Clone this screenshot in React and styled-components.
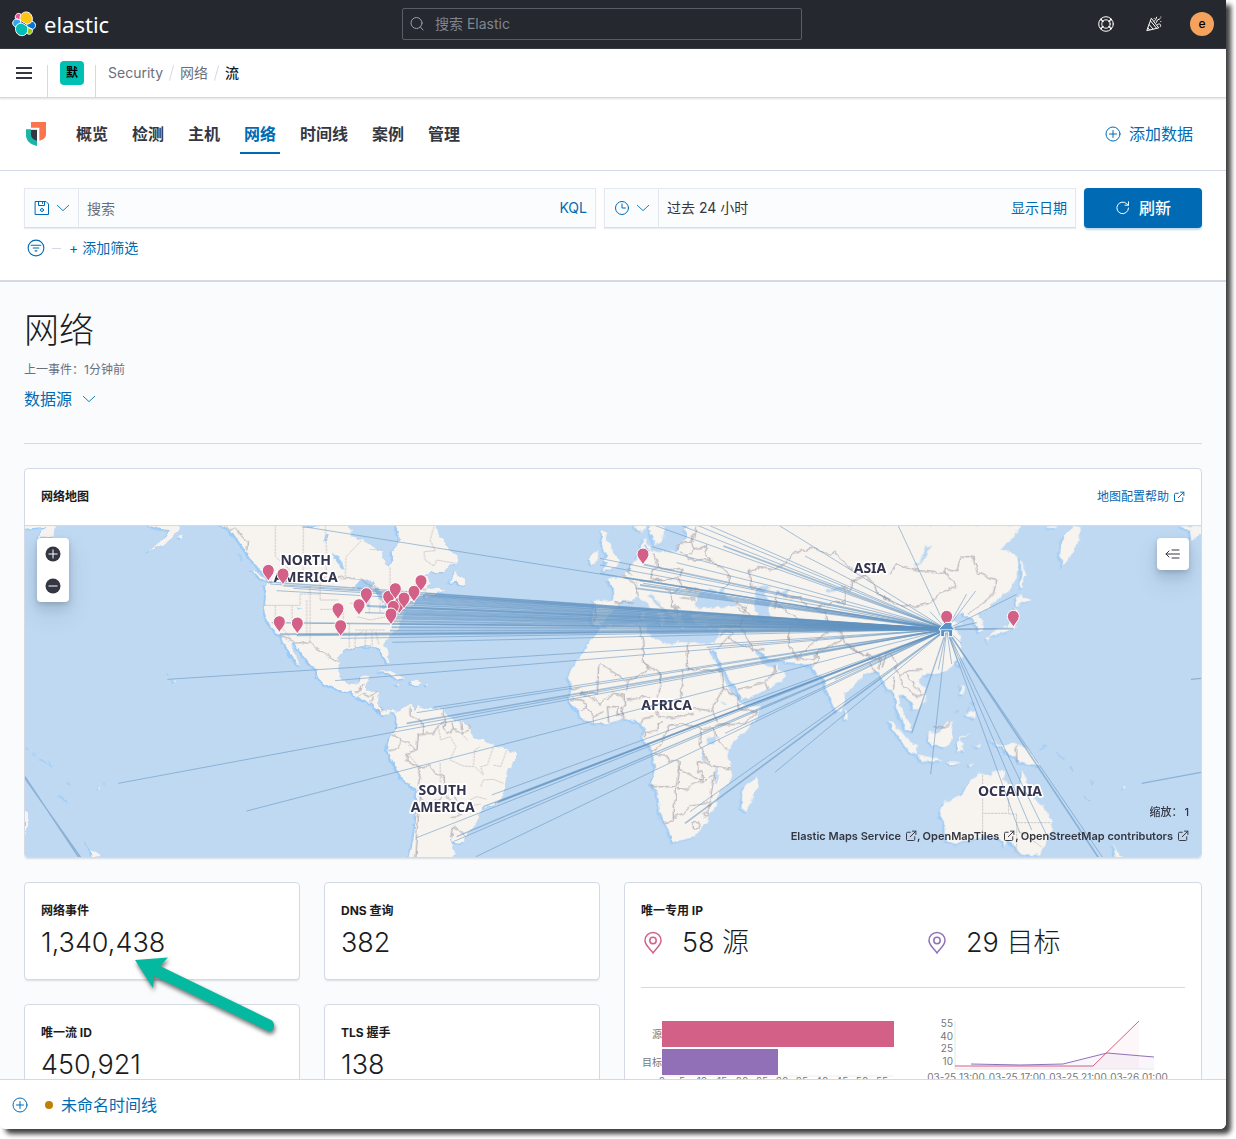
import React from 'react';
import styled, { createGlobalStyle, css } from 'styled-components';

const c = {
  ink: '#343741',
  title: '#1a1c21',
  muted: '#69707d',
  link: '#006bb4',
  line: '#d3dae6',
  pink: '#d36086',
  purple: '#9170b8',
  accent: '#6092c0',
};

const GlobalStyle = createGlobalStyle`
  *, *::before, *::after { box-sizing: border-box; }
  body {
    margin: 0;
    min-height: 100vh;
    background: #fff;
    color: ${c.ink};
    font: 400 14px/24px Inter, 'Noto Sans CJK SC', sans-serif;
  }
  button, input { font: inherit; color: inherit; }
  button { border: 0; padding: 0; background: none; cursor: pointer; }
  a { color: ${c.link}; text-decoration: none; }
  h1, h2, h3, p { margin: 0; }
  svg { display: block; flex: none; }
`;

/* ---------- window ---------- */

const Desktop = styled.div`
  height: 100vh;
  padding: 0 10px 10px 0;
  overflow: hidden;
`;

const Frame = styled.div`
  display: flex;
  flex-direction: column;
  height: 100%;
  overflow: hidden;
  background: #fff;
  border-radius: 0 0 6px 6px;
  box-shadow: 5px 5px 5px rgba(0, 0, 0, 0.75);
`;

const Scroller = styled.main`
  flex: 1;
  min-height: 0;
  overflow-y: auto;
  scrollbar-width: none;
  background: #fafbfd;
`;

/* ---------- headers ---------- */

const TopBar = styled.header`
  display: flex;
  align-items: center;
  height: 49px;
  flex: none;
  padding: 0 12px;
  border-bottom: 1px solid #343741;
  background: #25282f;
  color: #fff;
`;

const Brand = styled.a`
  display: flex;
  flex: 1 1 0;
  align-items: center;
  gap: 8px;
  color: #fff;
  font: 400 22px/32px 'Noto Sans', sans-serif;
`;

const GlobalSearch = styled.label`
  display: flex;
  align-items: center;
  gap: 8px;
  width: 400px;
  height: 32px;
  padding: 0 6px;
  border: 1px solid #5a5d66;
  border-radius: 2px;
  color: #98a2b3;
  input {
    flex: 1;
    min-width: 0;
    border: 0;
    outline: 0;
    background: none;
  }
  input::placeholder { color: #81858f; opacity: 1; }
`;

const TopActions = styled.div`
  display: flex;
  flex: 1 1 0;
  justify-content: flex-end;
  gap: 24px;
  padding-left: 22px;
`;

const IconButton = styled.button`
  display: grid;
  place-items: center;
  width: ${(p) => p.$size || 24}px;
  height: ${(p) => p.$size || 24}px;
  color: ${(p) => p.$color || 'inherit'};
`;

const Avatar = styled.button`
  width: 24px;
  height: 24px;
  border-radius: 50%;
  background: #f5a35c;
  color: #000;
  font-size: 12px;
  font-weight: 500;
  line-height: 24px;
`;

const CrumbBar = styled.div`
  display: flex;
  align-items: center;
  height: 49px;
  flex: none;
  border-bottom: 1px solid ${c.line};
  box-shadow: 0 1px 2px rgba(152, 162, 179, 0.35);
`;

const MenuButton = styled(IconButton)`
  width: 47px;
  height: 48px;
`;

const Divider = styled.span`
  align-self: flex-end;
  width: 1px;
  height: 32px;
  background: ${c.line};
`;

const Space = styled.button`
  width: 24px;
  height: 24px;
  margin: 0 11px 0 12px;
  border-radius: 4px;
  background: #00bfb3;
  color: #000;
  font-size: 12px;
  font-weight: 600;
  line-height: 24px;
`;

const Crumbs = styled.nav`
  display: flex;
  align-items: center;
  gap: 8px;
  padding-left: 12px;
  a { color: ${c.muted}; }
  strong { font-weight: 500; color: ${c.title}; }
`;

const Slash = styled.span`
  width: 1px;
  height: 16px;
  background: ${c.line};
  transform: rotate(15deg);
`;

const NavBar = styled.div`
  display: flex;
  align-items: center;
  height: 73px;
  flex: none;
  padding: 0 33px 0 26px;
  border-bottom: 1px solid ${c.line};
`;

const Tabs = styled.nav`
  display: flex;
  flex: 1;
  gap: 16px;
  padding-left: 26px;
`;

const Tab = styled.a`
  padding: 6px 4px;
  font-size: 16px;
  font-weight: 600;
  line-height: 28px;
  color: ${(p) => (p.$active ? c.link : c.ink)};
  box-shadow: ${(p) => (p.$active ? `inset 0 -2px ${c.link}` : 'none')};
`;

const IconLink = styled.a`
  display: flex;
  align-items: center;
  gap: ${(p) => p.$gap || 8}px;
  font-size: ${(p) => p.$size || 14}px;
`;

/* ---------- query bar ---------- */

const Query = styled.section`
  flex: none;
  padding: 17px 24px 20px;
  border-bottom: 2px solid ${c.line};
`;

const QueryRow = styled.div`
  display: flex;
  gap: 8px;
`;

const Field = styled.div`
  display: flex;
  flex: ${(p) => p.$flex};
  min-width: 0;
  height: 40px;
  border: 1px solid #e4e8f0;
  border-bottom-color: #d9deea;
  background: #fbfcfd;
  box-shadow: 0 1px 1px rgba(152, 162, 179, 0.2);
`;

const FieldMenu = styled.button`
  display: flex;
  align-items: center;
  justify-content: center;
  gap: 6px;
  width: 54px;
  border-right: 1px solid #e4e8f0;
  color: ${c.link};
`;

const FieldInput = styled.input`
  flex: 1;
  min-width: 0;
  padding: 2px 8px 0;
  border: 0;
  outline: 0;
  background: none;
  &::placeholder { color: ${c.muted}; opacity: 1; }
`;

const FieldValue = styled.button`
  flex: 1;
  padding: 0 8px;
  text-align: left;
`;

const FieldAction = styled.button`
  padding: 0 8px;
  color: ${c.link};
`;

const Refresh = styled.button`
  display: flex;
  align-items: center;
  justify-content: center;
  gap: 8px;
  width: 118px;
  height: 40px;
  border-radius: 4px;
  background: ${c.link};
  color: #fff;
  font-size: 16px;
  font-weight: 500;
  box-shadow: 0 2px 2px rgba(0, 107, 180, 0.25);
`;

const Filters = styled.div`
  display: flex;
  align-items: center;
  gap: 4px;
  padding-top: 8px;
`;

const Dash = styled.span`
  width: 9px;
  height: 1px;
  background: ${c.line};
`;

const AddFilter = styled.button`
  padding: 0 4px;
  color: ${c.link};
`;

/* ---------- page ---------- */

const Page = styled.div`
  padding: 24px;
`;

const PageTitle = styled.h1`
  color: ${c.title};
  font-size: 35px;
  font-weight: 200;
  line-height: 48px;
`;

const LastEvent = styled.p`
  margin-top: 6px;
  color: ${c.muted};
  font-size: 12px;
  line-height: 20px;
`;

const SourceButton = styled.button`
  display: flex;
  align-items: center;
  gap: 10px;
  margin-top: 7px;
  color: ${c.link};
  font-size: 16px;
`;

const Rule = styled.hr`
  margin: ${(p) => p.$space};
  border: 0;
  border-top: 1px solid ${c.line};
`;

const panel = css`
  background: #fff;
  border: 1px solid ${c.line};
  border-radius: 4px;
  box-shadow: 0 2px 2px -1px rgba(152, 162, 179, 0.35);
`;

const MapPanel = styled.section`
  ${panel}
  overflow: hidden;
`;

const MapHead = styled.div`
  display: flex;
  align-items: center;
  justify-content: space-between;
  height: 57px;
  padding: 0 16px;
  border-bottom: 1px solid ${c.line};
`;

const SmallTitle = styled.h3`
  color: ${c.title};
  font-size: 12px;
  font-weight: 700;
  line-height: 24px;
`;

const MapBox = styled.div`
  position: relative;
  height: 331px;
  background: #bfd9f2;
`;

const MapArt = styled.svg`
  width: 100%;
  height: 100%;
`;

const MapTools = styled.div`
  position: absolute;
  top: 12px;
  ${(p) => p.$side}: 12px;
  display: flex;
  flex-direction: column;
  border-radius: 4px;
  background: #fff;
  color: ${c.ink};
  box-shadow: 0 12px 24px rgba(65, 78, 101, 0.14), 0 6px 12px rgba(65, 78, 101, 0.16),
    0 2px 4px rgba(65, 78, 101, 0.2);
`;

const MapNotes = styled.div`
  position: absolute;
  right: 12px;
  bottom: 9px;
  font-size: 11px;
  line-height: 24px;
  text-align: right;
  color: ${c.ink};
`;

const Zoom = styled.div`
  font-weight: 500;
  span { margin-left: 2px; }
`;

const Credits = styled.div`
  display: flex;
  justify-content: flex-end;
  font-weight: 600;
  a {
    display: flex;
    align-items: center;
    gap: 4px;
    color: ${c.ink};
  }
  span { margin-right: 2px; }
`;

/* ---------- statistics ---------- */

const Stats = styled.div`
  display: grid;
  grid-template-columns: 1fr 1fr;
  gap: 24px;
  padding-top: 24px;
`;

const Cards = styled.div`
  display: grid;
  grid-template-columns: 1fr 1fr;
  grid-auto-rows: 98px;
  gap: 24px;
`;

const Card = styled.section`
  ${panel}
  position: relative;
  padding: 16px;
`;

const Figure = styled.p`
  color: ${c.title};
  font-size: 27px;
  font-weight: 300;
  line-height: 40px;
`;

const Pair = styled.div`
  display: grid;
  grid-template-columns: 1fr 1fr;
  gap: 24px;
`;

const Metric = styled.div`
  display: flex;
  align-items: center;
  gap: 17px;
`;

const Arrow = styled.svg`
  position: absolute;
  z-index: 2;
  top: 69px;
  left: 105px;
  filter: drop-shadow(1px 3px 2px rgba(0, 0, 0, 0.55));
`;

const Chart = styled.svg`
  font: 400 10px Inter, 'Noto Sans CJK SC', sans-serif;
  fill: #777;
`;

const Timeline = styled.footer`
  display: flex;
  align-items: center;
  height: 50px;
  flex: none;
  gap: 17px;
  padding: 0 12px;
  border-top: 1px solid ${c.line};
  background: #fff;
`;

const TimelineName = styled.button`
  display: flex;
  align-items: center;
  gap: 8px;
  color: ${c.link};
  font-size: 16px;
  &::before {
    content: '';
    width: 8px;
    height: 8px;
    border-radius: 50%;
    background: #c07f06;
  }
`;

/* ---------- icons ---------- */

const Icon = ({ size = 16, children, stroke = 1, ...rest }) => (
  <svg width={size} height={size} viewBox="0 0 16 16" fill="none" stroke="currentColor"
    strokeWidth={stroke} strokeLinecap="round" strokeLinejoin="round" aria-hidden="true" {...rest}>
    {children}
  </svg>
);

const ElasticLogo = () => (
  <svg width="24" height="26" viewBox="0 0 72 78" aria-hidden="true">
    <g stroke="#fff" strokeWidth="3">
      <path d="M10 22C8 10 18 3 27 10L25 27Z" fill="#f04e98" />
      <path d="M12 24C-1 28-1 44 11 48L27 38L25 27Z" fill="#36a4ef" />
      <path d="M60 31C74 34 74 52 61 55L44 46L45 34Z" fill="#0b73d1" />
      <path d="M61 55C64 65 54 74 46 68L46 49Z" fill="#93c90e" />
      <path d="M25 28C21 14 30 3 43 3C56 3 64 18 60 31C57 36 50 40 43 39Z" fill="#fec514" />
      <path d="M11 48C13 40 22 36 30 36L46 46C50 60 44 74 30 74C17 74 8 62 11 48Z" fill="#02bcb7" />
    </g>
  </svg>
);

const SecurityLogo = () => (
  <svg width="20" height="24" viewBox="0 0 60 72" aria-hidden="true">
    <path d="M15 0H60V36C60 47 52 54 40 56V17H15Z" fill="#fa744e" />
    <path d="M0 22H15V23H33V72C14 68 0 57 0 40Z" fill="#1db3a8" />
    <path d="M15 24H33V56C22 53 15 47 15 38Z" fill="#343741" />
  </svg>
);

const Magnifier = () => (
  <Icon><circle cx="7.5" cy="7" r="5.5" /><path d="M11.5 11l2.5 3" /></Icon>
);
const LifeRing = () => (
  <Icon>
    <circle cx="8" cy="8" r="7.3" /><circle cx="8" cy="8" r="4.2" />
    <path d="M3 2.9l2.1 2.4M2.9 4.4L5 5.6M13 2.9l-2.1 2.4M13.2 4.4L11 5.6M3 13.1l2.1-2.4M2.9 11.6L5 10.4M13 13.1l-2.1-2.4M13.2 11.6L11 10.4" />
  </Icon>
);
const Cheer = () => (
  <Icon>
    <path d="M5.2 2.6L.8 14.6L12.3 12ZM4.6 5L10.400 12M3.200 8.600L7 13M2 12L3.600 14" />
    <path d="M8.200 2.300v.1M10.600 1.200l-.8 2.400l-1.400 1.400M14 2.800l-2.600 1.200l-1 2.400M14.800 1v.1M14.800 5.400v.1M11.600 8.400c2.400-1.600 4 .6 2.600 2.400" />
  </Icon>
);
const Burger = () => (
  <Icon stroke={2} strokeLinecap="butt"><path d="M0 3h16M0 8h16M0 13h16" /></Icon>
);
const PlusCircle = () => (
  <Icon><circle cx="8" cy="8" r="7" /><path d="M4.500 8h7M8 4.500v7" /></Icon>
);
const SaveIcon = () => (
  <Icon>
    <path d="M1.500 1.500h10.500l2.500 2.500v10.500h-13zM4.500 1.500v4h6v-4" />
    <circle cx="8" cy="10" r="1.500" /><path d="M8.500 2.500v1" />
  </Icon>
);
const ChevronDown = () => (
  <Icon size={14}><path d="M1.500 5l6.500 6l6.500-6" /></Icon>
);
const Clock = () => (
  <Icon><circle cx="8" cy="8" r="6.500" /><path d="M8 4v4h3.500" /></Icon>
);
const RefreshIcon = () => (
  <Icon><path d="M13.500 8A5.800 5.800 0 1 1 11.800 3.800L13.500 5.200M13.500 1.800v3.400h-3.500" /></Icon>
);
const FilterIcon = () => (
  <Icon size={18}><circle cx="8" cy="8" r="7" /><path d="M3.800 5.500h8.400M5.500 8h5M7.200 10.500h1.600" /></Icon>
);
const Popout = () => (
  <Icon size={12} stroke={1.300}>
    <path d="M7 3H3.500Q2 3 2 4.500v8Q2 14 3.500 14h8Q13 14 13 12.500V9M10 1.500h4.500V6M14.500 1.500L7 9" />
  </Icon>
);
const ZoomDot = ({ plus }) => (
  <Icon strokeLinecap="butt">
    <circle cx="8" cy="8" r="7.500" fill={c.ink} stroke="none" />
    <path d={plus ? 'M3.500 8h9M8 3.500v9' : 'M3.500 8h9'} stroke="#fff" />
  </Icon>
);
const MenuLeft = () => (
  <Icon><path d="M7 4h7M1 8h13.500M7 12h7M4 5L1 8l3 3" /></Icon>
);
const MarkerIcon = ({ color }) => (
  <svg width="24" height="24" viewBox="0 0 24 24" fill="none" stroke={color} strokeWidth="1.500" aria-hidden="true">
    <path d="M12 22C10 18.500 4 14.500 4 9.500A8 8 0 0 1 20 9.500C20 14.500 14 18.500 12 22Z" />
    <circle cx="12" cy="9.500" r="3.200" />
  </svg>
);

/* ---------- world map ---------- */

const AMERICAS = `M-267 15L-230 40L-212 66L-190 95L-170 125L-150 150L-130 165L-125 190L-135 195L-132 230L-137 275L-130 300
L-108 332L-85 350L-72 382L-55 408L-30 438L-33 428L-45 405L-58 372L-46 366L-30 392L0 430L20 450L22 470L40 490L75 505L120 515L135 525
L165 545L185 550L200 570L215 582L232 584L240 576L255 578L262 592L262 620L240 650L230 690L245 715L275 775L320 810L322 860
L318 900L310 960L298 1015L425 1015L435 998L425 975L420 960L440 968L463 965L463 948L475 940L500 910L505 885L520 865L555 855
L575 835L585 800L590 755L618 722L618 700L590 690L575 682L540 672L520 660L490 655L480 620L460 606L435 602L405 580L395 568
L345 566L325 558L314 570L305 550L290 558L270 572L260 578L250 568L235 575L215 575L205 558L205 530L207 520L190 515L165 515
L165 500L175 482L178 465L155 468L148 487L120 495L95 482L85 450L88 410L105 390L135 384L155 378L190 380L210 385L222 412
L235 430L234 402L222 372L240 345L268 320L274 290L290 265L312 255L320 238L345 222L350 236L375 222L405 212L385 206L362 210
L345 205L365 190L355 172L340 170L365 155L402 156L415 138L440 130L443 110L420 92L405 68L385 40L378 15L258 15L270 60L262 76
L245 95L250 122L240 141L224 128L218 110L215 90L195 85L170 65L125 52L125 30L112 15Z`;

const AMERICAN_ISLES = `M415 188L430 165L440 150L440 165L465 180L465 195L445 192L440 185ZM208 455L235 450L260 463L286 475L265 478
L235 460ZM303 482L320 482L335 488L325 494L305 495ZM255 492l12 2l-4 4ZM346 492l8 1l-2 4ZM-485 15L-392 15L-395 30L-430 68L-487 95
L-440 60L-420 30L-460 25ZM-396 48L-382 44L-388 56ZM-855 15L-764 15L-770 50L-818 50L-790 20L-855 26ZM-175 148L-140 170L-130 182L-148 176Z
M-855 870L-846 880L-844 910L-855 948ZM-660 985L-655 1015L-632 1012L-634 1002ZM-409 478l5 2l-4 5ZM-632 800l4 4l-5 6Z`;

const OLD_WORLD = `M-20 240L15 242L38 240L44 215L22 180L48 172L66 165L88 150L96 130L110 116L122 82L128 55L140 52L138 70L150 90
L175 96L230 95L236 70L256 62L262 40L250 28L268 15L1260 15L1262 22L1200 92L1230 95L1250 110L1255 130L1246 180L1225 215L1190 240
L1170 262L1135 280L1146 300L1153 330L1136 338L1128 318L1122 300L1105 288L1092 290L1086 276L1096 268L1080 282L1060 300L1066 308
L1086 310L1066 322L1078 348L1085 380L1086 408L1060 436L1020 460L990 465L970 460L956 480L975 508L979 540L956 565L940 566
L930 542L912 524L898 530L900 560L912 586L932 612L936 636L916 626L900 592L888 565L886 520L862 510L850 485L840 460L812 455
L790 465L762 500L735 520L732 560L712 580L700 560L676 500L668 468L650 465L635 440L600 430L560 426L530 420L500 412L480 395
L465 382L466 400L482 418L490 432L505 440L522 442L528 428L530 446L556 462L545 485L500 510L424 542L412 512L390 480L355 420
L342 390L336 392L326 385L330 400L345 430L370 475L395 520L415 545L440 560L482 558L470 592L440 632L400 665L383 700L395 752
L390 785L355 820L350 862L328 882L320 910L280 952L215 968L205 930L180 880L172 812L152 795L166 745L155 690L130 655L134 622
L120 612L100 600L70 597L25 610L-20 610L-45 602L-70 570L-92 545L-85 500L-97 470L-75 430L-50 400L-30 360L-10 340L2 322
L-14 318L-26 300L-18 262Z`;

const OLD_ISLES = `M5 34L22 36L16 58L32 72L36 96L48 106L60 122L48 142L10 152L22 132L8 122L24 108L14 92L6 66ZM-22 100L-6 90
L-6 120L-26 135L-32 118ZM100 15L122 36L140 15ZM148 15L152 42L166 76L186 64L192 30L188 15ZM470 765L476 788L456 842L440 876
L424 864L426 826L434 796L456 786ZM735 570L743 580L742 600L734 596ZM174 306l22-2l-8 12ZM124 278l8-4l2 22l-9 2ZM244 322l24 2l-20 4Z
M318 328l16-5l-10 9ZM138 74l14 2l-8 14Z`;

const FAR_ISLES = `M392 288L400 320L410 346L398 352L402 380L390 386L394 340ZM378 412L394 402L404 412L422 420L396 430L380 442Z
M374 440L386 468L372 508L340 518L306 526L290 534L300 520L336 504L356 496L370 474ZM286 530L300 535L294 550ZM550 198L568 200L570 236
L542 290L518 320L510 282L520 226ZM470 198h28v6h-28ZM870 198L932 198L932 222L904 244L898 210ZM202 602L210 600L208 626ZM212 675
L222 680L218 704L206 702L214 690ZM228 762L256 754L256 776L238 770ZM-6 785L12 790L40 822L64 850L82 860L80 886L52 868L20 820Z
M82 884L108 888L158 902L128 906L88 898ZM115 820L150 816L168 790L192 784L182 806L188 832L166 862L126 856L114 838ZM200 848L212 830
L242 824L208 840L222 852L214 856L222 876L212 866L200 876ZM166 904h30l14 8l-30-2ZM236 912l18-6l-14 12ZM252 856l24-2l-8 8ZM300 838
L340 858L370 848L416 868L440 900L454 918L420 912L386 908L380 892L346 876L338 862L312 850ZM165 1025L215 1005L240 962L268 940
L296 946L310 935L345 936L340 960L378 986L390 974L396 935L410 960L420 1000L458 1040L486 1076L484 1112L466 1150L450 1184L424 1186
L390 1180L370 1155L352 1140L344 1160L330 1138L300 1125L244 1140L200 1152L168 1142L165 1100L150 1058ZM670 1154L682 1180L700 1188
L676 1194ZM696 980l8-2l-6 10Z`;

const INLAND_WATER = `M0 322L50 318L112 312L138 316L142 340L175 360L215 378L232 364L262 364L300 374L342 370L354 345L360 318L318 320
L284 312L272 275L246 278L250 312L232 316L214 285L190 262L152 218L146 228L160 245L198 285L190 305L170 285L128 238L112 232L95 240
L60 245L52 262L30 285L-2 308ZM290 235L300 212L330 208L348 216L344 226L380 193L372 222L405 245L407 258L350 262L292 264L284 250Z
M465 225L478 200L500 195L510 205L490 220L515 245L505 270L515 300L490 312L470 300L475 275L460 250ZM525 210L548 214L568 205L560 228L530 222Z
M676 212L700 206L735 198L734 206L686 218ZM940 136L958 128L976 80L993 76L980 108L950 140ZM320 655L345 650L344 672L322 674Z
M304 680L312 700L318 726L306 715ZM342 735L350 745L354 790L346 786ZM364 546l12 0l0 6l-12 0Z`;

const LAKES = `M128 204L148 184L176 178L194 192L176 204L150 206ZM168 222L178 214L174 258L166 250ZM188 210L206 204L220 226L210 242
L198 218ZM64 98L80 106L98 128L104 150L90 140L74 116ZM40 68L46 44L56 42L52 62ZM206 262L232 250L226 264ZM-40 262l14 6l-10 4Z
M-30 20L0 15L30 20L6 24Z`;

const AMERICAN_BORDERS = `M-260 15L-240 30L-222 24L-205 48L-188 68L-190 90M-130 188L-60 178L0 176L105 172L150 178L190 200L214 228L216 250
L250 240L300 210L330 185L345 215M-85 350L-32 372L0 366L26 388L44 396L60 416L86 424M134 516L150 512L152 496L164 490M150 530L160 520
L180 528L204 518M180 545L196 532M208 560L218 575M245 645L272 655L276 670L250 690L234 692M274 656L320 690L292 700L290 722L322 742
M300 560L300 586L335 604L342 640L325 646L320 690M342 640L372 640L384 618L405 598L396 572M405 598L402 625L412 640L430 630L454 638
L474 632L478 614M430 630L426 604M456 636L452 606M322 742L360 738L376 760L402 772L404 800M322 742L330 770L324 800L332 830L326 880
L320 940L314 1015M330 830L346 850L390 840L404 800L432 828L446 850M430 922L424 956M430 922L450 932L464 950M405 820L440 870L452 886
L418 890M200 570L212 580`;

const STATE_LINES = `M-104 15V110L-60 150M-20 15V176M46 15L50 100L48 172M154 62L108 110L106 170M216 90L180 88M240 142V205M372 20
L360 60L376 92L342 95L345 120L372 138L380 120L436 130M-136 256H-30V222H30M-104 256V300L-60 352M-54 256V310M0 200V366M30 170V240H84
M30 268H100V310H0M-10 240V344M60 310H118V344M118 344V382M136 330H225M135 382V350L160 332M165 378L168 332M186 376V332M206 372L196 332
M142 290L180 300L230 290M178 280V240M210 278V246M120 250H170M384 618L392 660L420 650L438 680L420 720L460 738L490 740L494 690L510 680
M494 740L520 765L512 740L532 735L550 680M550 735L572 740L590 690M390 730L392 800L440 800M512 800L520 780L550 778L580 790M470 860
L512 852M454 640L474 662M292 700L330 745M480 840L500 830L530 838`;

const OLD_BORDERS = `M42 245L100 250M-12 250L-18 305M64 165L92 180L110 195L114 230M98 132L82 150L100 168M160 100L170 118L172 140L152 150
L160 178L200 180L232 170L250 200L300 212M116 186L200 180M172 140L205 152L246 148L240 170M232 95L238 70L274 68L282 90L262 108L240 96M274 68
L290 20M282 90L320 78L312 98L332 118L270 120L262 108M332 118L386 160L388 186L372 205M194 200L214 222L240 200L290 216M214 222V260L240 264
M240 232L284 238M222 262L238 290M448 150L452 200M446 160L480 140L530 148L566 120L576 100L640 84L690 104L704 96L740 135L798 170L824 192
L830 220L870 240M452 200L488 210M404 250L440 262L430 280L410 258M425 262L452 286M430 290L470 300M524 264L528 216L570 236L600 230L622 262L640 266
M524 248L580 290L620 316L684 310L678 280L640 266L700 246L734 250V200L752 216L760 180L798 170M570 320L566 376L590 414L640 370L690 330L720 330
L730 370L780 400L826 412M360 318L420 318L430 290M420 318L440 350L460 390L382 356M356 350L382 330L400 340L380 356L350 390M460 385L490 390
M415 508L490 488L524 456L522 436M495 488L505 512M585 415L640 420L655 390L690 380L730 355M636 440L655 420L650 395M740 370L790 404M800 400
L806 420L840 410L836 450M806 430L830 462M846 440L860 400L880 390M118 316L128 360L130 430L180 456L178 480M130 430L150 446L84 486L0 430
M-4 430L-8 518H-60M178 455L182 500L172 530M262 366V450H362M250 450V480L242 530L250 560L300 568L330 572M362 450L370 505L336 566L352 606
M172 530L160 562L180 590L220 596L280 580M0 556L14 540L40 520L72 526L74 560L60 590M84 486L80 510M80 540L150 530M22 560H54V590M22 560L26 606M66 560
L68 598M122 612L130 596L164 590M136 634H170L172 612L190 608M136 634V652M155 690L170 690L190 660L206 616L240 612L290 620L304 626L342 624
M370 505L412 530L410 560L470 580L430 612L342 616M342 624L346 650L384 690M304 626L300 680L330 736L394 748M160 702L200 706L206 722H236L238 750
M238 748L282 770L306 782V756L294 754L292 726L312 724L330 736M150 800H232L238 750M228 806V850H220V902L204 910L192 906M232 806L262 808
L280 790L310 786L344 760L330 840L318 850L276 854L250 880L222 890M330 846L322 880M312 884a7 7 0 1 0 14 0a7 7 0 1 0 -14 0
M278 916a11 9 0 1 0 22 0a11 9 0 1 0 -22 0M-60 505L-90 510M-88 538L-50 540L-40 560L-60 572M-40 560L-20 590L-18 610M-20 590L10 575M0 556L-30 530L-60 520
M870 160L890 130L920 142L960 152L1040 162L1070 198L1020 218L990 250L940 260L880 250L830 220M1034 160L1040 146L1070 152L1084 108L1118 112
L1136 160L1190 180L1180 220L1160 240L1104 280M870 400L890 430L886 450L900 470L920 452L966 450M900 470L912 500L950 530L972 520M884 470L880 510
M918 452L942 500L966 520M1000 620H1040L1054 606M1250 674V728`;

const AUSSIE_LINES = `M278 945V1130M356 965V1060H278M380 1062V1180M356 1062H380M382 1088H484M382 1110L440 1150L456 1162`;

const COAST_FRAGMENTS = `M440 462l6 4M16 684l6 4M38 700l8 8M58 718l20 10M84 724l14 18M138 784l8 10M118 828l20 18M194 968l16 22
M658 104l8 20M246 796l6-4M2850 560l-12 16M2814 574l-8 6M2850 545l14 12M3060 690l20-14M3108 698l24 22M3150 740l8 14M3192 830l16 14
M3210 780l6 14`;

const HUB = [2780, 328];

/* x, y, weight */
const ROUTES = [
  [442, 478], [295, 790], [680, 873], [850, 20], [745, 186, 4], [750, 192], [790, 198], [820, 205], [770, 212],
  [755, 308, 4], [780, 343, 6], [830, 346, 6], [962, 355], [1117, 367], [945, 482],
  [1215, 220, 4], [1210, 226, 6], [1190, 232, 6], [1180, 240, 6], [1170, 246, 6], [1165, 250, 4], [1160, 255, 5], [1150, 262, 7],
  [1040, 258, 6], [1035, 278, 4], [1140, 270, 6], [1130, 276, 6], [1126, 284, 5], [1120, 290, 6], [1118, 296, 5],
  [1115, 304, 6], [1110, 312, 5], [1115, 322, 6], [1110, 332, 5],
  [1240, 562], [1190, 578], [1160, 610, 5], [1125, 625], [1415, 825], [1425, 850, 4], [1435, 845, 5], [1390, 860, 4], [1190, 953],
  [1300, 965], [1310, 950, 4], [1368, 1010], [1995, 910, 5], [2010, 875], [2265, 757], [2115, 640], [2445, 478],
  [1740, 115], [1740, 135], [1740, 160], [1810, 172, 5], [1860, 195, 6], [1870, 190], [1870, 133, 5], [1895, 80], [1970, 128],
  [1900, 15], [1980, 15], [2030, 15], [2065, 15], [2110, 78, 5], [2275, 15], [2355, 108], [1850, 205, 5], [1960, 215], [2060, 318],
  [2060, 382], [2635, 18], [2730, 275], [2840, 222], [2867, 213], [2990, 223], [2870, 308, 4], [2980, 326, 5],
  [2795, 432], [2755, 448], [2675, 640, 4], [2732, 763], [3240, 1020, 5], [3250, 1015], [3000, 940], [3035, 930], [3080, 945],
  [2824, 370], [2820, 445],
];

const LOOSE_ROUTES = 'M15 770L178 1015M15 775L184 1015M3365 790L3543 757M3513 478L3543 475';

const PINS = [
  [745, 182], [789, 193], [778, 336], [832, 340], [954, 297], [962, 348], [1017, 285], [1039, 252], [1106, 260],
  [1138, 280], [1120, 290], [1113, 313], [1126, 237], [1152, 265], [1182, 245], [1203, 213], [1869, 133], [2780, 320], [2980, 320],
];

const LABELS = [
  [857, 136, 'NORTH'], [857, 187, 'AMERICA'], [1268, 825, 'SOUTH'], [1268, 876, 'AMERICA'],
  [1940, 570, 'AFRICA'], [2550, 158, 'ASIA'], [2970, 828, 'OCEANIA'],
];

const Land = ({ x = 0, y = 0, d }) => (
  <g transform={`translate(${x} ${y})`}>
    <path d={d} fill="#9ecbf6" stroke="#9ecbf6" strokeWidth="2" transform="translate(-5 4)" />
    <path d={d} fill="#f7f4ef" />
  </g>
);

const WorldMap = () => (
  <MapArt viewBox="15 18 3528 993" preserveAspectRatio="xMidYMid slice" role="img" aria-label="网络地图">
    <defs>
      <filter id="rugged" filterUnits="userSpaceOnUse" x="0" y="0" width="3560" height="1030">
        <feTurbulence type="fractalNoise" baseFrequency="0.05" numOctaves="2" seed="4" />
        <feDisplacementMap in="SourceGraphic" scale="16" xChannelSelector="R" yChannelSelector="G" />
      </filter>
    </defs>
    <g filter="url(#rugged)">
      <Land x={870} d={AMERICAS} />
      <Land x={870} d={AMERICAN_ISLES} />
      <Land x={1740} d={OLD_WORLD} />
      <path d={INLAND_WATER} transform="translate(1740)" fill="#bfd9f2" />
      <Land x={1740} d={OLD_ISLES} />
      <Land x={2610} y={-180} d={FAR_ISLES} />
      <path d={LAKES} transform="translate(870)" fill="#a9cff3" />
      <path d={COAST_FRAGMENTS} stroke="#9ecbf6" strokeWidth="4" />
      <g fill="none" stroke="#a5a0aa" strokeWidth="3" strokeLinejoin="round">
        <path d={AMERICAN_BORDERS} transform="translate(870)" />
        <path d={OLD_BORDERS} transform="translate(1740)" />
      </g>
    </g>
    <g fill="none" stroke="#cfcacb" strokeWidth="3" strokeDasharray="8 2">
      <path d={STATE_LINES} transform="translate(870)" />
      <path d={AUSSIE_LINES} transform="translate(2610 -180)" />
    </g>
    <g fontFamily="'Noto Sans', sans-serif" fontSize="42" fontWeight="700" textAnchor="middle"
      fill="#33334d" stroke="#fff" strokeWidth="10" strokeLinejoin="round" paintOrder="stroke">
      {LABELS.map(([x, y, text]) => <text key={`${x}-${y}`} x={x} y={y}>{text}</text>)}
    </g>
    <g stroke={c.accent} strokeOpacity="0.55" fill="none">
      {ROUTES.map(([x, y, w = 3]) => (
        <path key={`${x}-${y}`} d={`M${x} ${y}L${HUB[0]} ${HUB[1]}`} strokeWidth={w} />
      ))}
      <path d={LOOSE_ROUTES} strokeWidth="4" />
    </g>
    {PINS.map(([x, y]) => (
      <path key={`${x}-${y}`} transform={`translate(${x} ${y})`} fill={c.pink} stroke="#fff" strokeWidth="3"
        d="M0 2C-5-10-18-18-18-31A18 18 0 0 1 18-31C18-18 5-10 0 2Z" />
    ))}
    <path transform="translate(2780 328)" fill="#5b92c4" stroke="#fff" strokeWidth="3"
      d="M-22-2L-3-21H16V-9L22-2V2H18V22H6V8H-6V22H-18V2H-22Z" />
    <path d="M2762 329H2798" stroke="#fff" strokeWidth="2" />
  </MapArt>
);

/* ---------- charts ---------- */

const BarChart = () => (
  <Chart width="260" height="90" viewBox="0 0 260 90" role="img" aria-label="唯一专用 IP 柱状图">
    <rect x="21" y="9" width="232" height="26" fill={c.pink} />
    <rect x="21" y="37" width="116" height="26" fill={c.purple} />
    <path d="M21 64H253" stroke="#eee" />
    <g textAnchor="end"><text x="21" y="26">源</text><text x="21" y="54">目标</text></g>
    <g textAnchor="middle">
      {[0, 5, 10, 15, 20, 25, 30, 35, 40, 45, 50, 55].map((v) => (
        <text key={v} x={21 + v * 4} y="73">{v}</text>
      ))}
    </g>
  </Chart>
);

const LineChart = () => (
  <Chart width="260" height="90" viewBox="0 0 260 90" role="img" aria-label="唯一专用 IP 折线图">
    <path d="M30 54H168L214 9V57H30Z" fill={c.pink} fillOpacity="0.05" />
    <path d="M46 52L96 53L138 52L182 41L229 45V57H46Z" fill={c.purple} fillOpacity="0.06" />
    <path d="M30 9V57H229" fill="none" stroke="#e6e6e6" />
    <path d="M46 52L96 53L138 52L182 41L229 45" fill="none" stroke={c.purple} />
    <path d="M30 54H168L214 9" fill="none" stroke={c.pink} />
    <g textAnchor="end">
      {[[55, 15], [40, 28], [25, 40], [10, 53]].map(([v, y]) => <text key={v} x="28" y={y}>{v}</text>)}
    </g>
    <g textAnchor="middle">
      {['03-25 13:00', '03-25 17:00', '03-25 21:00', '03-26 01:00'].map((t, i) => (
        <text key={t} x={31 + i * 61} y="69">{t}</text>
      ))}
    </g>
  </Chart>
);

const TABS = ['概览', '检测', '主机', '网络', '时间线', '案例', '管理'];
const CARDS = [['网络事件', '1,340,438'], ['DNS 查询', '382'], ['唯一流 ID', '450,921'], ['TLS 握手', '138']];

export default function App() {
  return (
    <Desktop>
      <GlobalStyle />
      <Frame>
        <TopBar>
          <Brand href="#home"><ElasticLogo />elastic</Brand>
          <GlobalSearch>
            <Magnifier />
            <input type="search" placeholder="搜索 Elastic" aria-label="搜索 Elastic" />
          </GlobalSearch>
          <TopActions>
            <IconButton aria-label="帮助"><LifeRing /></IconButton>
            <IconButton aria-label="新闻"><Cheer /></IconButton>
            <Avatar aria-label="账户">e</Avatar>
          </TopActions>
        </TopBar>
        <CrumbBar>
          <MenuButton aria-label="菜单"><Burger /></MenuButton>
          <Divider />
          <Space>默</Space>
          <Divider />
          <Crumbs>
            <a href="#security">Security</a><Slash />
            <a href="#network">网络</a><Slash />
            <strong>流</strong>
          </Crumbs>
        </CrumbBar>
        <NavBar>
          <SecurityLogo />
          <Tabs>
            {TABS.map((t) => <Tab key={t} href="#tab" $active={t === '网络'}>{t}</Tab>)}
          </Tabs>
          <IconLink href="#add" $size={16}><PlusCircle />添加数据</IconLink>
        </NavBar>
        <Query>
          <QueryRow>
            <Field $flex="1">
              <FieldMenu aria-label="已保存查询"><SaveIcon /><ChevronDown /></FieldMenu>
              <FieldInput placeholder="搜索" aria-label="搜索" />
              <FieldAction>KQL</FieldAction>
            </Field>
            <Field $flex="0 1 472px">
              <FieldMenu aria-label="快速选择日期"><Clock /><ChevronDown /></FieldMenu>
              <FieldValue>过去 24 小时</FieldValue>
              <FieldAction>显示日期</FieldAction>
            </Field>
            <Refresh><RefreshIcon />刷新</Refresh>
          </QueryRow>
          <Filters>
            <IconButton $color={c.link} aria-label="筛选选项"><FilterIcon /></IconButton>
            <Dash />
            <AddFilter>+ 添加筛选</AddFilter>
          </Filters>
        </Query>
        <Scroller>
          <Page>
            <PageTitle>网络</PageTitle>
            <LastEvent>上一事件：1分钟前</LastEvent>
            <SourceButton>数据源<ChevronDown /></SourceButton>
            <Rule $space="32px 0 24px" />
            <MapPanel>
              <MapHead>
                <SmallTitle>网络地图</SmallTitle>
                <IconLink href="#help" $size={12} $gap={4}>地图配置帮助<Popout /></IconLink>
              </MapHead>
              <MapBox>
                <WorldMap />
                <MapTools $side="left">
                  <IconButton $size={32} aria-label="放大"><ZoomDot plus /></IconButton>
                  <IconButton $size={32} aria-label="缩小"><ZoomDot /></IconButton>
                </MapTools>
                <MapTools $side="right">
                  <IconButton $size={32} aria-label="展开图层"><MenuLeft /></IconButton>
                </MapTools>
                <MapNotes>
                  <Zoom>缩放：<span>1</span></Zoom>
                  <Credits>
                    <a href="#ems">Elastic Maps Service <Popout /></a><span>,</span>
                    <a href="#omt">OpenMapTiles <Popout /></a><span>,</span>
                    <a href="#osm">OpenStreetMap contributors <Popout /></a>
                  </Credits>
                </MapNotes>
              </MapBox>
            </MapPanel>
            <Stats>
              <Cards>
                {CARDS.map(([name, value], i) => (
                  <Card key={name}>
                    <SmallTitle>{name}</SmallTitle>
                    <Figure>{value}</Figure>
                    {i === 0 && (
                      <Arrow width="156" height="90" viewBox="130 952 156 90" aria-hidden="true">
                        <path d="M135 960L168 957.500L160 966L271 1020C276 1023 275 1032 268 1031L154 976L153 988Z" fill="#04b99f" />
                      </Arrow>
                    )}
                  </Card>
                ))}
              </Cards>
              <Card>
                <SmallTitle>唯一专用 IP</SmallTitle>
                <Pair>
                  <Metric><MarkerIcon color={c.pink} /><Figure>58 源</Figure></Metric>
                  <Metric><MarkerIcon color={c.purple} /><Figure>29 目标</Figure></Metric>
                </Pair>
                <Rule $space="24px 0" />
                <Pair><BarChart /><LineChart /></Pair>
              </Card>
            </Stats>
          </Page>
        </Scroller>
        <Timeline>
          <IconButton $size={16} $color={c.link} aria-label="新建时间线"><PlusCircle /></IconButton>
          <TimelineName>未命名时间线</TimelineName>
        </Timeline>
      </Frame>
    </Desktop>
  );
}
